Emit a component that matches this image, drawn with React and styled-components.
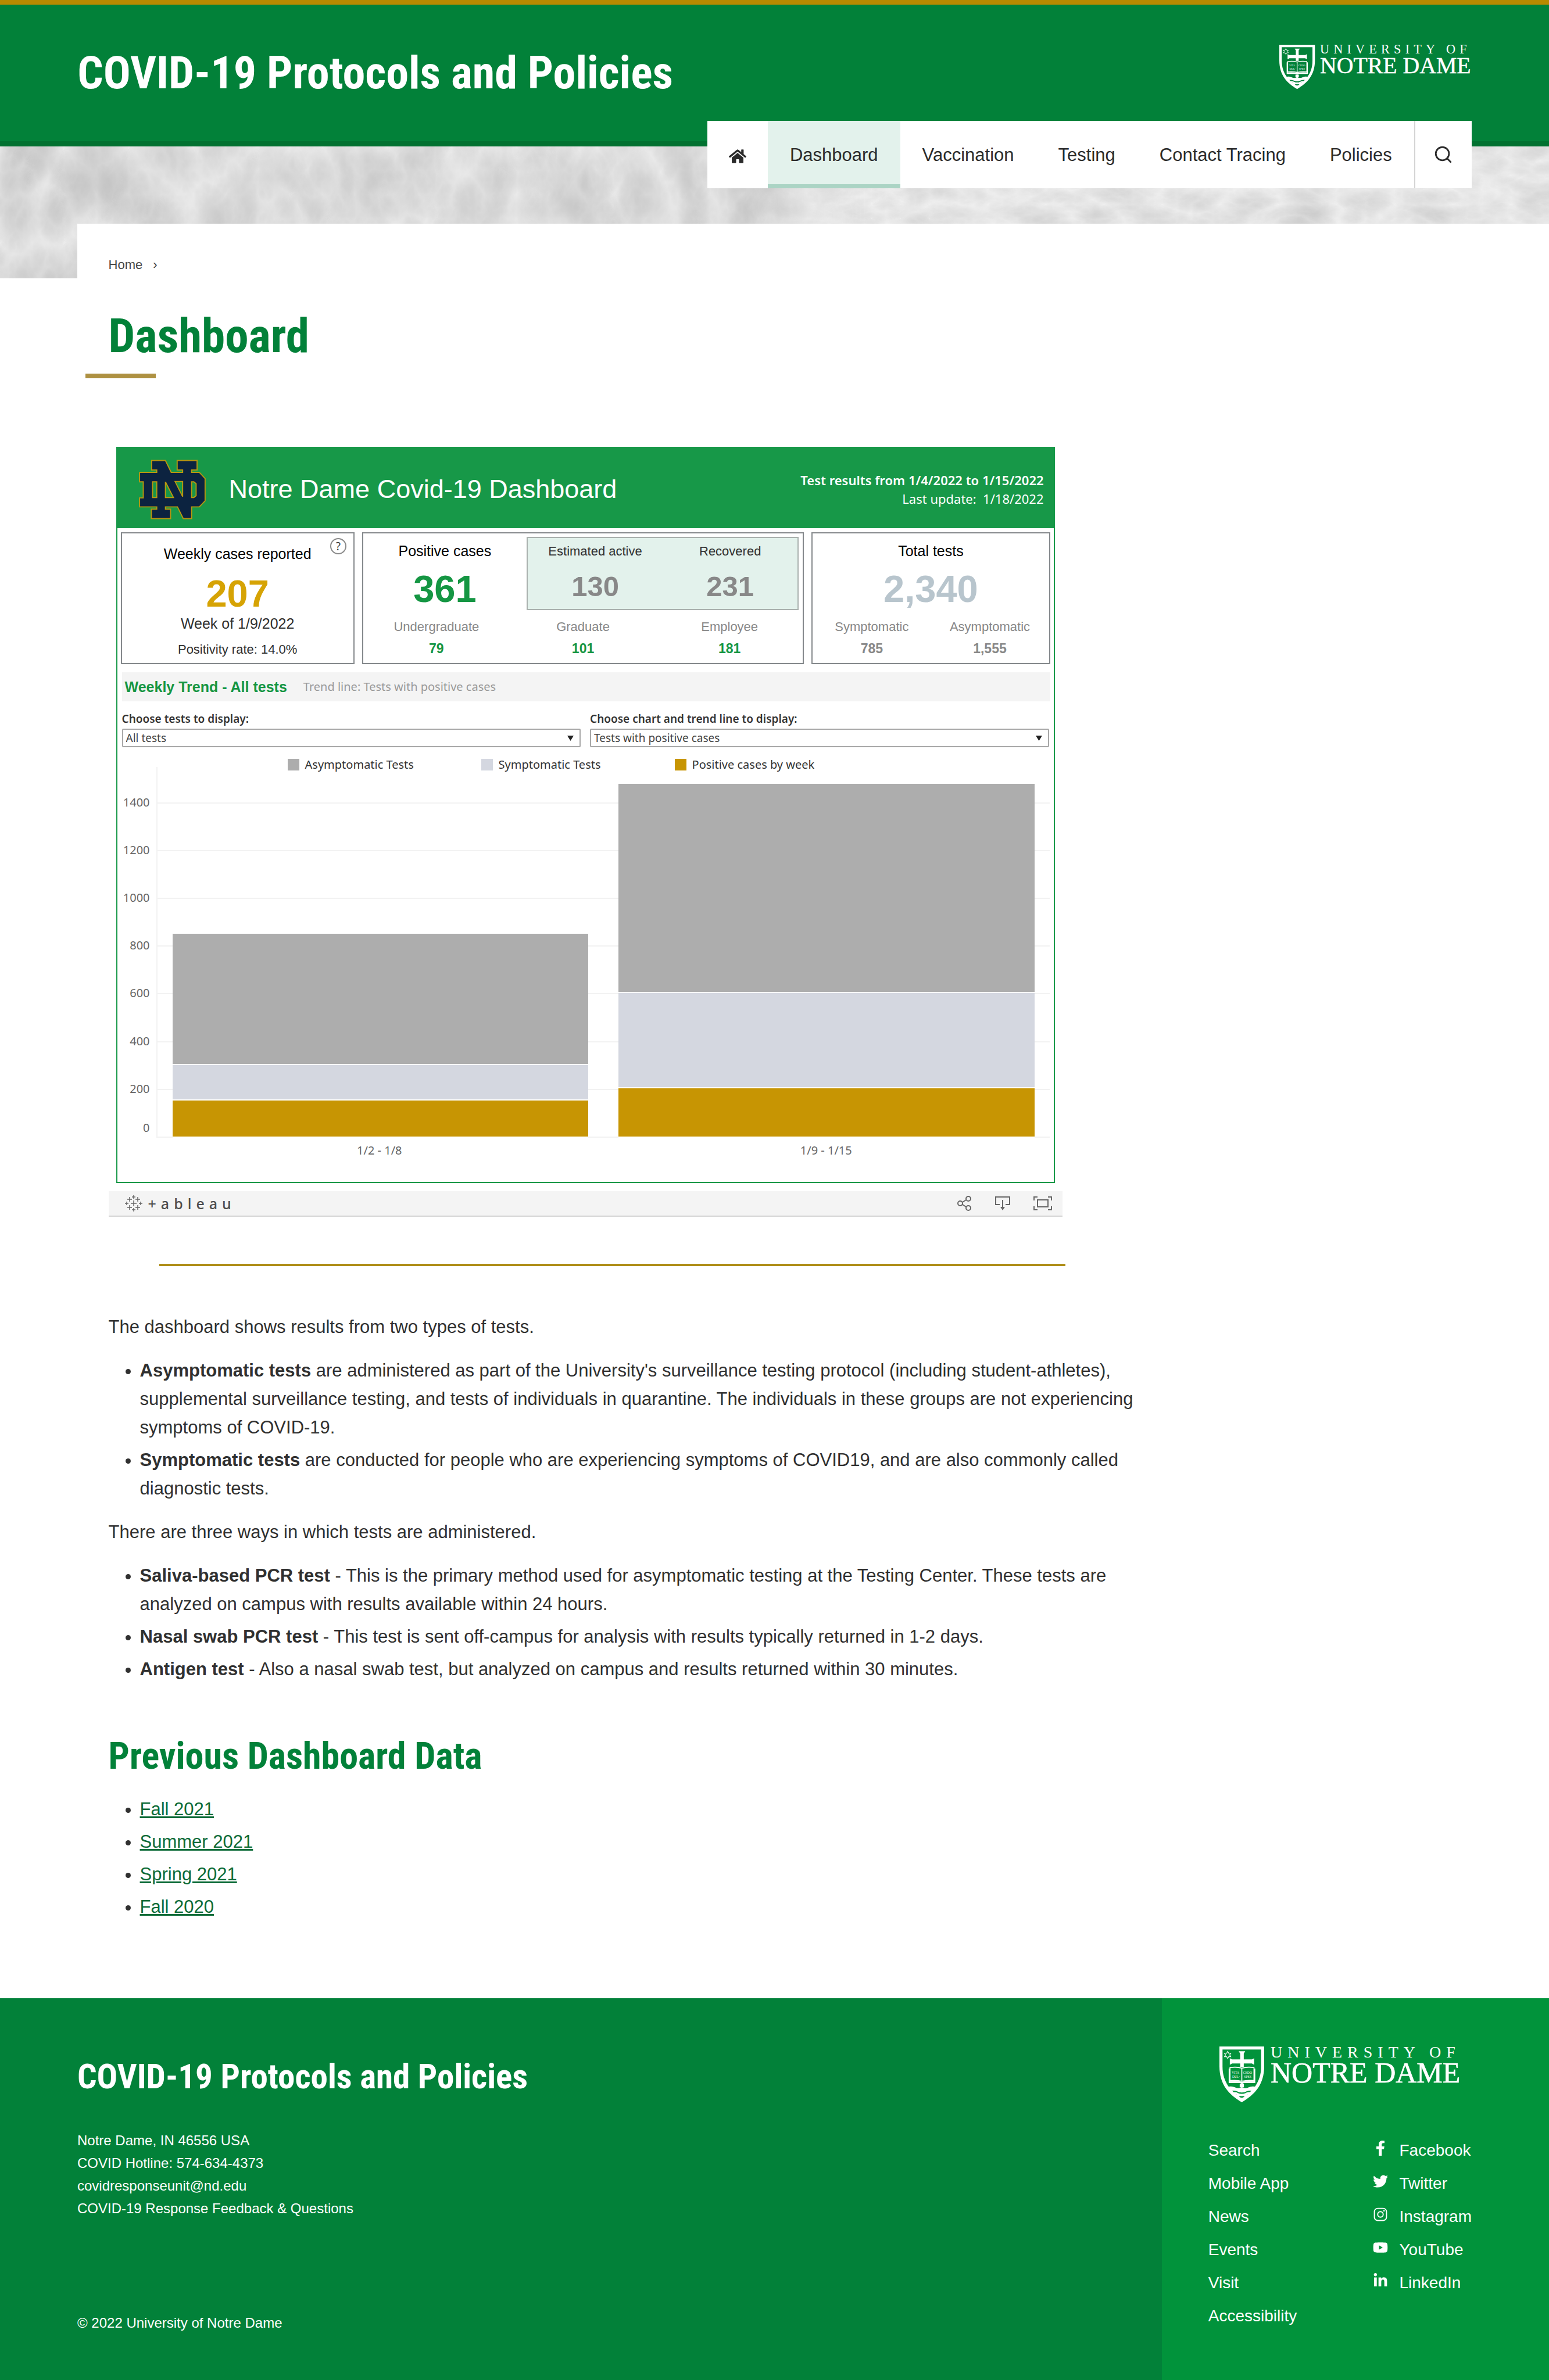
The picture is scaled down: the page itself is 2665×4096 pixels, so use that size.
import React from "react";
import styled, { createGlobalStyle } from "styled-components";
import { FaHome, FaFacebookF, FaTwitter, FaYoutube, FaLinkedinIn } from "react-icons/fa";
import { IoLogoInstagram } from "react-icons/io5";
import { Search } from "lucide-react";

const sans = `"Liberation Sans", Arial, sans-serif`;
const display = `"Roboto Condensed", "Open Sans Condensed", sans-serif`;
const viz = `"Noto Sans", "Open Sans", sans-serif`;
const green = "#028139";
const vizGreen = "#179848";

const GlobalStyle = createGlobalStyle`
  *, *::before, *::after { box-sizing: border-box; }
  body { margin: 0; background: #fff; color: #303030; font-family: ${sans}; font-size: 31px; line-height: 49px; }
  h1, h2, h3, p, ul { margin: 0; padding: 0; }
`;

/* ---------- University mark ---------- */

const LogoSvg = styled.svg`
  display: block;
  width: ${(p) => p.$width}px;
  height: auto;
  flex: none;
  overflow: visible;
  fill: #fff;
  font-family: "Liberation Serif", "Times New Roman", serif;
`;
const TrackedText = styled.text`
  font-size: 28px;
  letter-spacing: 9px;
`;

function UniversityLogo({ width }) {
  return (
    <LogoSvg $width={width} viewBox="0 0 416 97" role="img" aria-label="University of Notre Dame">
      <g transform="scale(0.279) translate(-57 -54)">
        <path
          fillRule="evenodd"
          d="M57 54H333V175C333 290 275 350 195 398C115 350 57 290 57 175ZM76 73V178C76 275 128 332 195 375C262 332 314 275 314 178V73Z"
        />
        <path
          fill="none"
          stroke="#fff"
          strokeWidth="4"
          d="M108 84l6 12 13 0-7 10 7 11-13 0-6 12-7-12-13 0 7-11-7-10 13 0z"
        />
        <path d="M176 84h40l-9 14v36h50l14-7v40l-14-8h-50v20h-22v-20h-50l-14 8v-40l14 7h50v-36z" />
        <path
          fill="none"
          stroke="#fff"
          strokeWidth="6"
          d="M122 184Q165 178 195 188Q228 178 270 184V264Q228 260 195 268Q165 260 122 264ZM195 188V272"
        />
        <path d="M114 190h8v78q45-4 73 4q30-8 75-4v-78h8v90h-70l-12 6-12-6h-70z" />
        <text x="133" y="222" fontSize="20">VITA</text>
        <text x="203" y="222" fontSize="20">CEDO</text>
        <text x="136" y="247" fontSize="20">DUL·</text>
        <text x="209" y="247" fontSize="20">SPES</text>
        <path d="M182 286h26v20h-26z" />
        <path d="M104 304q28-8 48 2q26 12 43-2q17 14 43 2q20-10 48-2l-20 26q-22-8-40 0q-14 8-31 8t-31-8q-18-8-40 0z" />
        <path fill="none" stroke="#fff" strokeWidth="12" d="M132 346q22-10 40 2q23 12 46 0q18-12 40-2" />
        <path fillRule="evenodd" d="M150 354q45-16 90 0l-45 38zM176 364q19 12 38 0q-19-12-38 0z" />
      </g>
      <TrackedText x="88" y="19">UNIVERSITY OF</TrackedText>
      <text x="88" y="62" fontSize="50" stroke="#fff" strokeWidth="0.6">NOTRE DAME</text>
    </LogoSvg>
  );
}

/* ---------- Site header ---------- */

const Header = styled.header`
  background: ${green};
  border-top: 8px solid #b88a00;
  border-bottom: 9px solid #027130;
`;
const HeaderInner = styled.div`
  display: flex;
  align-items: center;
  justify-content: space-between;
  min-height: 235px;
  padding: 0 5%;
`;
const SiteTitle = styled.a`
  font: 700 78px/80px ${display};
  color: #fff;
  text-decoration: none;
`;
const HeaderLogo = styled.a`
  align-self: flex-start;
  padding-top: 69px;
`;

const Hero = styled.div`
  position: relative;
  height: 227px;
  padding: 0 5%;
  display: flex;
  justify-content: flex-end;
  align-items: flex-start;
  background: #e6e6e6;
`;
const Texture = styled.svg`
  position: absolute;
  inset: 0;
  width: 100%;
  height: 100%;
`;
const Nav = styled.nav`
  position: relative;
  display: flex;
  height: 116px;
  margin-top: -44px;
  background: #fff;
`;
const NavLink = styled.a`
  display: flex;
  align-items: center;
  padding: 0 38px;
  color: #2b2b2b;
  text-decoration: none;
  ${(p) => p.$active && "background: #e3f2ec; box-shadow: inset 0 -7px #abd4c4;"}
`;
const HomeLink = styled(NavLink)`
  justify-content: center;
  width: 104px;
  padding: 6px 0 0;
`;
const SearchButton = styled.button`
  display: flex;
  align-items: center;
  justify-content: center;
  width: 99px;
  padding: 0;
  border: 0;
  border-left: 2px solid #d4d4d4;
  background: #fff;
  color: #2b2b2b;
`;

const navItems = ["Dashboard", "Vaccination", "Testing", "Contact Tracing", "Policies"];

function HeroTexture() {
  return (
    <Texture aria-hidden="true">
      <defs>
        <filter id="leaves" x="0" y="0" width="100%" height="100%" colorInterpolationFilters="sRGB">
          <feTurbulence type="turbulence" baseFrequency="0.009 0.006" numOctaves="5" seed="11" />
          <feColorMatrix values="-0.19 0 0 0 0.92  -0.19 0 0 0 0.92  -0.19 0 0 0 0.92  0 0 0 0 1" />
        </filter>
        <filter id="stone" x="0" y="0" width="100%" height="100%" colorInterpolationFilters="sRGB">
          <feTurbulence type="turbulence" baseFrequency="0.01 0.02" numOctaves="6" seed="3" />
          <feColorMatrix values="-0.14 0 0 0 0.94  -0.14 0 0 0 0.94  -0.14 0 0 0 0.94  0 0 0 0 1" />
        </filter>
        <linearGradient id="fade">
          <stop offset="0.48" stopColor="#000" />
          <stop offset="0.56" stopColor="#fff" />
        </linearGradient>
        <mask id="stoneMask">
          <rect width="100%" height="100%" fill="url(#fade)" />
        </mask>
      </defs>
      <rect width="100%" height="100%" filter="url(#leaves)" />
      <g mask="url(#stoneMask)">
        <rect width="100%" height="100%" filter="url(#stone)" />
      </g>
    </Texture>
  );
}

/* ---------- Page body ---------- */

const Card = styled.main`
  position: relative;
  margin: -94px 0 0 5%;
  padding: 55px 0 107px 2%;
  background: #fff;
`;
const Breadcrumb = styled.nav`
  display: flex;
  gap: 18px;
  font-size: 22px;
  line-height: 32px;
  color: #444;
  a { color: inherit; text-decoration: none; }
`;
const PageTitle = styled.h1`
  margin-top: 67px;
  font: 700 81px/80px ${display};
  color: ${green};
  &::after {
    content: "";
    display: block;
    width: 121px;
    height: 8px;
    margin: 24px 0 0 -40px;
    background: #ae9142;
  }
`;
const Article = styled.article`
  max-width: 1786px;
`;
const Divider = styled.hr`
  max-width: 1559px;
  height: 4px;
  margin: 81px auto 80px 87px;
  border: 0;
  background: #ae8d17;
`;
const BulletList = styled.ul`
  margin: 26px 0;
  padding-left: 54px;
  li + li { margin-top: 7px; }
`;
const SectionTitle = styled.h2`
  margin: 94px 0 34px;
  font: 700 64px/64px ${display};
  color: ${green};
`;
const TextLink = styled.a`
  color: #0c6b37;
  text-decoration: underline;
`;

/* ---------- Embedded dashboard ---------- */

const Embed = styled.section`
  max-width: 1641px;
  margin-top: 105px;
  font-family: ${viz};
`;
const Board = styled.div`
  margin: 0 13px 14px;
  padding-bottom: 40px;
  border: 2px solid ${vizGreen};
  position: relative;
`;
const EmbedFrame = styled.div`
  padding-top: 13px;
`;
const BoardHeader = styled.div`
  display: flex;
  align-items: center;
  height: 138px;
  padding: 4px 17px 0 37px;
  background: ${vizGreen};
  color: #fff;
`;
const Monogram = styled.svg`
  width: 115px;
  height: 103px;
  margin-right: 40px;
`;
const BoardTitle = styled.h2`
  flex: 1;
  font: 400 45px/56px ${sans};
`;
const BoardDates = styled.div`
  text-align: right;
  font-size: 22px;
  line-height: 32px;
  strong { font-weight: 600; }
`;
const Stats = styled.div`
  display: grid;
  grid-template-columns: 402fr 760fr 410fr;
  gap: 13px;
  margin: 7px 6px 0;
`;
const StatBox = styled.div`
  position: relative;
  height: 227px;
  border: 2px solid #85898c;
  text-align: center;
  font-family: ${sans};
`;
const StatTop = styled.div`
  display: grid;
  grid-template-columns: ${(p) => (p.$split ? "281fr 468fr" : "1fr")};
  height: 132px;
  padding-right: ${(p) => (p.$split ? 7 : 0)}px;
`;
const StatHead = styled.div`
  padding-top: ${(p) => p.$top || 14}px;
`;
const StatTitle = styled.h3`
  font: 400 25px/32px ${sans};
  color: #000;
`;
const StatText = styled.p`
  margin-top: ${(p) => p.$gap || 0}px;
  font-size: ${(p) => (p.$small ? 22 : 25)}px;
  line-height: 32px;
`;
const BigNumber = styled.div`
  margin-top: ${(p) => p.$gap || 15}px;
  font-size: 65px;
  line-height: 70px;
  font-weight: 700;
  color: ${(p) => p.$color};
`;
const ActiveBox = styled.div`
  display: grid;
  grid-template-columns: 1fr 1fr;
  height: 126px;
  margin-top: 6px;
  padding-top: 7px;
  border: 2px solid #aab1ae;
  background: #e3f2ec;
`;
const MidNumber = styled.div`
  margin-top: 16px;
  font-size: 49px;
  line-height: 56px;
  font-weight: 700;
  color: #888;
`;
const SubStats = styled.div`
  display: grid;
  grid-template-columns: repeat(${(p) => p.$cols}, 1fr);
  margin-top: 13px;
  font-size: 22px;
  line-height: 32px;
  color: #888;
`;
const SubValue = styled.div`
  margin-top: 5px;
  font-size: 23px;
  font-weight: 700;
  color: ${(p) => p.$color};
`;
const HelpButton = styled.button`
  position: absolute;
  top: 8px;
  right: 12px;
  width: 28px;
  height: 28px;
  padding: 0;
  border: 2px solid #8a8a8a;
  border-radius: 50%;
  background: #fff;
  color: #333;
  font: 19px/24px ${viz};
`;
const TrendStrip = styled.div`
  display: flex;
  align-items: center;
  gap: 28px;
  height: 50px;
  margin: 14px 6px 0 8px;
  padding-left: 5px;
  background: #f4f4f4;
`;
const TrendTitle = styled.h3`
  font: 700 25px/32px ${sans};
  color: #159643;
`;
const TrendNote = styled.span`
  font-size: 20px;
  line-height: 32px;
  color: #999;
`;
const Filters = styled.div`
  display: grid;
  grid-template-columns: 1fr 1fr;
  gap: 16px;
  margin: 16px 8px 0;
`;
const Field = styled.div`
  position: relative;
  label {
    display: block;
    margin-bottom: 3px;
    font-size: 19px;
    line-height: 28px;
    font-weight: 600;
    color: #333;
  }
  svg {
    position: absolute;
    right: 12px;
    bottom: 11px;
    pointer-events: none;
  }
`;
const Select = styled.select`
  display: block;
  width: 100%;
  height: 32px;
  padding: 0 5px;
  border: 2px solid #a8a8a8;
  border-radius: 2px;
  background: #fff;
  color: #444;
  font: 400 19px/28px ${viz};
  appearance: none;
`;
const Legend = styled.div`
  display: flex;
  margin: 16px 0 0 293px;
`;
const LegendItem = styled.div`
  display: flex;
  align-items: center;
  gap: 10px;
  width: 333px;
  font-size: 20px;
  line-height: 28px;
  color: #333;
  &::before {
    content: "";
    width: 20px;
    height: 20px;
    background: ${(p) => p.$color};
  }
`;
const Chart = styled.div`
  margin: -10px 7px 0 67px;
  font-size: 20px;
  line-height: 28px;
  color: #666;
`;
const Plot = styled.div`
  position: relative;
  display: grid;
  grid-template-columns: 1fr 1fr;
  align-items: end;
  height: 638px;
  border-left: 2px solid #f2f2f2;
`;
const GridLine = styled.div`
  position: absolute;
  left: -2px;
  right: 0;
  height: 2px;
  background: #f2f2f2;
`;
const Tick = styled.span`
  position: absolute;
  right: 100%;
  bottom: ${(p) => (p.$base ? 3 : -12)}px;
  margin-right: 11px;
`;
const Bar = styled.div`
  position: relative;
  display: flex;
  flex-direction: column;
  justify-content: flex-end;
  height: 100%;
  padding: 0 26px;
`;
const Segment = styled.div`
  background: ${(p) => p.$color};
  border-bottom: 2px solid #fff;
`;
const WeekLabels = styled.div`
  display: grid;
  grid-template-columns: 1fr 1fr;
  margin-top: 8px;
  text-align: center;
`;
const Toolbar = styled.div`
  display: flex;
  align-items: center;
  gap: 40px;
  height: 44px;
  padding: 0 18px 0 28px;
  border-bottom: 2px solid #d4d4d4;
  background: #f4f4f4;
`;
const Brand = styled.a`
  display: flex;
  align-items: center;
  gap: 10px;
  margin-right: auto;
  color: #4d4d4d;
  font: 500 25px/40px ${viz};
  letter-spacing: 8px;
  text-decoration: none;
`;
const ToolButton = styled.button`
  display: flex;
  padding: 0;
  border: 0;
  background: none;
  color: #666;
`;
const LineIcon = styled.svg`
  fill: none;
  stroke: currentColor;
  stroke-width: 2;
`;

const SCALE_MAX = 1552;
const ticks = [0, 200, 400, 600, 800, 1000, 1200, 1400];
const colors = { asymptomatic: "#adadad", symptomatic: "#d4d7e0", positive: "#c79503" };
const weeks = [
  { label: "1/2 - 1/8", asymptomatic: 549, symptomatic: 150, positive: 155 },
  { label: "1/9 - 1/15", asymptomatic: 876, symptomatic: 398, positive: 207 },
];
const share = (value) => `${(value / SCALE_MAX) * 100}%`;

function NDMonogram() {
  return (
    <Monogram viewBox="18 43 416 370" role="img" aria-label="ND">
      <path
        fill="#0c2340"
        stroke="#b8960f"
        strokeWidth="7"
        fillRule="evenodd"
        d="M97 47H183L219 121H290V106H256V47H380V106H346V121H394L430 160V298L394 336H346V409H294L258 336H183V350H215V409H95V350H129V336H22V280H45V180H22V121H129V106H97Z
           M103 180V278H129V180Z M183 180V278H233Z M243 178L290 272V178Z M346 180V278H360L374 266V192L360 180Z"
      />
    </Monogram>
  );
}

const pluses = [
  [15, 14, 5], [15, 3, 3], [15, 25, 3], [3, 14, 3], [27, 14, 3],
  [8, 7, 4], [22, 7, 4], [8, 21, 4], [22, 21, 4],
];

function Dashboard() {
  return (
    <Embed aria-label="Notre Dame Covid-19 Dashboard">
      <EmbedFrame>
        <Board>
          <BoardHeader>
            <NDMonogram />
            <BoardTitle>Notre Dame Covid-19 Dashboard</BoardTitle>
            <BoardDates>
              <strong>Test results from 1/4/2022 to 1/15/2022</strong>
              <div>Last update:&nbsp; 1/18/2022</div>
            </BoardDates>
          </BoardHeader>

          <Stats>
            <StatBox>
              <HelpButton aria-label="About weekly cases">?</HelpButton>
              <StatHead $top={19}>
                <StatTitle>Weekly cases reported</StatTitle>
                <BigNumber $gap={18} $color="#d6a304">207</BigNumber>
                <StatText>Week of 1/9/2022</StatText>
                <StatText $small $gap={13}>Positivity rate: 14.0%</StatText>
              </StatHead>
            </StatBox>
            <StatBox>
              <StatTop $split>
                <StatHead>
                  <StatTitle>Positive cases</StatTitle>
                  <BigNumber $color="#159643">361</BigNumber>
                </StatHead>
                <ActiveBox>
                  <div>
                    <StatText $small>Estimated active</StatText>
                    <MidNumber>130</MidNumber>
                  </div>
                  <div>
                    <StatText $small>Recovered</StatText>
                    <MidNumber>231</MidNumber>
                  </div>
                </ActiveBox>
              </StatTop>
              <SubStats $cols={3}>
                {[["Undergraduate", "79"], ["Graduate", "101"], ["Employee", "181"]].map(([name, value]) => (
                  <div key={name}>
                    {name}
                    <SubValue $color="#159643">{value}</SubValue>
                  </div>
                ))}
              </SubStats>
            </StatBox>
            <StatBox>
              <StatTop>
                <StatHead>
                  <StatTitle>Total tests</StatTitle>
                  <BigNumber $color="#b8c5cd">2,340</BigNumber>
                </StatHead>
              </StatTop>
              <SubStats $cols={2}>
                {[["Symptomatic", "785"], ["Asymptomatic", "1,555"]].map(([name, value]) => (
                  <div key={name}>
                    {name}
                    <SubValue $color="#888">{value}</SubValue>
                  </div>
                ))}
              </SubStats>
            </StatBox>
          </Stats>

          <TrendStrip>
            <TrendTitle>Weekly Trend - All tests</TrendTitle>
            <TrendNote>Trend line: Tests with positive cases</TrendNote>
          </TrendStrip>

          <Filters>
            <Field>
              <label htmlFor="tests">Choose tests to display:</label>
              <Select id="tests"><option>All tests</option></Select>
              <svg width="11" height="9" aria-hidden="true"><path d="M0 0H11L5.5 9Z" fill="#222" /></svg>
            </Field>
            <Field>
              <label htmlFor="chart">Choose chart and trend line to display:</label>
              <Select id="chart"><option>Tests with positive cases</option></Select>
              <svg width="11" height="9" aria-hidden="true"><path d="M0 0H11L5.5 9Z" fill="#222" /></svg>
            </Field>
          </Filters>

          <Legend>
            <LegendItem $color={colors.asymptomatic}>Asymptomatic Tests</LegendItem>
            <LegendItem $color={colors.symptomatic}>Symptomatic Tests</LegendItem>
            <LegendItem $color={colors.positive}>Positive cases by week</LegendItem>
          </Legend>

          <Chart>
            <Plot>
              {ticks.map((tick) => (
                <GridLine key={tick} style={{ bottom: share(tick) }}>
                  <Tick $base={tick === 0}>{tick}</Tick>
                </GridLine>
              ))}
              {weeks.map((week) => (
                <Bar key={week.label}>
                  {Object.keys(colors).map((kind) => (
                    <Segment key={kind} $color={colors[kind]} style={{ height: share(week[kind]) }} />
                  ))}
                </Bar>
              ))}
            </Plot>
            <WeekLabels>
              {weeks.map((week) => <span key={week.label}>{week.label}</span>)}
            </WeekLabels>
          </Chart>
        </Board>
      </EmbedFrame>

      <Toolbar>
        <Brand href="#tableau">
          <svg width="30" height="28" viewBox="0 0 30 28" fill="none" stroke="#666" strokeWidth="1.5" aria-hidden="true">
            {pluses.map(([x, y, r]) => (
              <path key={`${x}-${y}`} d={`M${x - r} ${y}H${x + r}M${x} ${y - r}V${y + r}`} />
            ))}
          </svg>
          +ableau
        </Brand>
        <ToolButton aria-label="Share">
          <LineIcon width="26" height="26" viewBox="0 0 26 26">
            <circle cx="6" cy="13" r="4" /><circle cx="20" cy="5" r="4" /><circle cx="20" cy="21" r="4" />
            <path d="M10 11L16 7M10 15L16 19" />
          </LineIcon>
        </ToolButton>
        <ToolButton aria-label="Download">
          <LineIcon width="26" height="26" viewBox="0 0 26 26">
            <path d="M8 15H1V2H25V15H18M13 7V22" />
            <path d="M9 19H17L13 25Z" fill="currentColor" stroke="none" />
          </LineIcon>
        </ToolButton>
        <ToolButton aria-label="Full screen">
          <LineIcon width="32" height="24" viewBox="0 0 32 24">
            <path d="M1 7V1H7M25 1H31V7M31 17V23H25M7 23H1V17M7 6H25V18H7Z" />
          </LineIcon>
        </ToolButton>
      </Toolbar>
    </Embed>
  );
}

/* ---------- Footer ---------- */

const Footer = styled.footer`
  display: grid;
  grid-template-columns: 3fr 1fr;
  min-height: 658px;
  color: #fff;
  a { color: inherit; text-decoration: none; }
`;
const FooterMain = styled.div`
  display: flex;
  flex-direction: column;
  align-items: flex-start;
  padding: 103px 0 80px 133px;
  background: ${green};
  font-size: 24px;
  line-height: 39px;
`;
const FooterTitle = styled.h2`
  margin-bottom: 58px;
  font: 700 59px/64px ${display};
`;
const Address = styled.address`
  display: flex;
  flex-direction: column;
  font-style: normal;
`;
const Copyright = styled.p`
  margin-top: auto;
`;
const FooterSide = styled.div`
  padding: 83px 133px 0 80px;
  background: #01933b;
`;
const FooterLogo = styled.a`
  display: block;
  margin-left: 19px;
`;
const FooterLinks = styled.div`
  display: flex;
  justify-content: space-between;
  margin-top: 53px;
  font-size: 28px;
  line-height: 57px;
  ul { list-style: none; }
`;
const SocialLink = styled.a`
  display: flex;
  gap: 20px;
  svg { width: 26px; margin-top: 12px; }
`;

const social = [
  ["Facebook", FaFacebookF],
  ["Twitter", FaTwitter],
  ["Instagram", IoLogoInstagram],
  ["YouTube", FaYoutube],
  ["LinkedIn", FaLinkedinIn],
];

export default function App() {
  return (
    <>
      <GlobalStyle />
      <Header>
        <HeaderInner>
          <SiteTitle href="#home">COVID-19 Protocols and Policies</SiteTitle>
          <HeaderLogo href="#nd"><UniversityLogo width={331} /></HeaderLogo>
        </HeaderInner>
      </Header>
      <Hero>
        <HeroTexture />
        <Nav aria-label="Primary">
          <HomeLink href="#home" aria-label="Home"><FaHome size={30} /></HomeLink>
          {navItems.map((item) => (
            <NavLink key={item} href={`#${item}`} $active={item === "Dashboard"}>{item}</NavLink>
          ))}
          <SearchButton aria-label="Search"><Search size={34} strokeWidth={2} /></SearchButton>
        </Nav>
      </Hero>

      <Card>
        <Breadcrumb aria-label="Breadcrumb">
          <a href="#home">Home</a>
          <span>›</span>
        </Breadcrumb>
        <PageTitle>Dashboard</PageTitle>
        <Article>
          <Dashboard />
          <Divider />
          <p>The dashboard shows results from two types of tests.</p>
          <BulletList>
            <li>
              <strong>Asymptomatic tests</strong> are administered as part of the University's surveillance testing
              protocol (including student-athletes), supplemental surveillance testing, and tests of individuals in
              quarantine. The individuals in these groups are not experiencing symptoms of COVID-19.
            </li>
            <li>
              <strong>Symptomatic tests</strong> are conducted for people who are experiencing symptoms of COVID19, and
              are also commonly called diagnostic tests.
            </li>
          </BulletList>
          <p>There are three ways in which tests are administered.</p>
          <BulletList>
            <li>
              <strong>Saliva-based PCR test</strong> - This is the primary method used for asymptomatic testing at the
              Testing Center. These tests are analyzed on campus with results available within 24 hours.
            </li>
            <li>
              <strong>Nasal swab PCR test</strong> - This test is sent off-campus for analysis with results typically
              returned in 1-2 days.
            </li>
            <li>
              <strong>Antigen test</strong> - Also a nasal swab test, but analyzed on campus and results returned within
              30 minutes.
            </li>
          </BulletList>
          <SectionTitle>Previous Dashboard Data</SectionTitle>
          <BulletList>
            {["Fall 2021", "Summer 2021", "Spring 2021", "Fall 2020"].map((term) => (
              <li key={term}><TextLink href={`#${term}`}>{term}</TextLink></li>
            ))}
          </BulletList>
        </Article>
      </Card>

      <Footer>
        <FooterMain>
          <FooterTitle>COVID-19 Protocols and Policies</FooterTitle>
          <Address>
            <span>Notre Dame, IN 46556 USA</span>
            <span>COVID Hotline: 574-634-4373</span>
            <a href="#mail">covidresponseunit@nd.edu</a>
            <a href="#feedback">COVID-19 Response Feedback &amp; Questions</a>
          </Address>
          <Copyright>© 2022 University of Notre Dame</Copyright>
        </FooterMain>
        <FooterSide>
          <FooterLogo href="#nd"><UniversityLogo width={416} /></FooterLogo>
          <FooterLinks>
            <ul>
              {["Search", "Mobile App", "News", "Events", "Visit", "Accessibility"].map((item) => (
                <li key={item}><a href={`#${item}`}>{item}</a></li>
              ))}
            </ul>
            <ul>
              {social.map(([name, Icon]) => (
                <li key={name}><SocialLink href={`#${name}`}><Icon size={26} aria-hidden="true" />{name}</SocialLink></li>
              ))}
            </ul>
          </FooterLinks>
        </FooterSide>
      </Footer>
    </>
  );
}
